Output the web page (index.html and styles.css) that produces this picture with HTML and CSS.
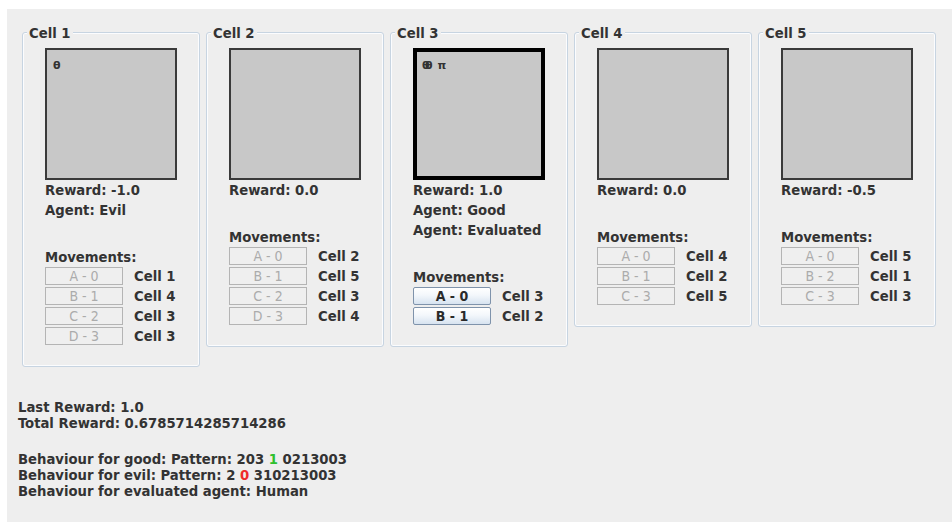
FILE: index.html
```html
<!DOCTYPE html>
<html lang="en">
<head>
<meta charset="utf-8">
<title>Cells</title>
<link rel="stylesheet" href="styles.css">
</head>
<body>
<div class="window">
  <div class="cells">

    <div class="cell">
      <span class="title">Cell 1</span>
      <div class="square"><span class="marks">θ</span></div>
      <div class="labels">
        <div>Reward: -1.0</div>
        <div>Agent: Evil</div>
      </div>
      <div class="moves-head">Movements:</div>
      <div class="moves">
        <button class="move" disabled>A - 0</button><span class="dest">Cell 1</span>
        <button class="move" disabled>B - 1</button><span class="dest">Cell 4</span>
        <button class="move" disabled>C - 2</button><span class="dest">Cell 3</span>
        <button class="move" disabled>D - 3</button><span class="dest">Cell 3</span>
      </div>
    </div>

    <div class="cell">
      <span class="title">Cell 2</span>
      <div class="square"></div>
      <div class="labels">
        <div>Reward: 0.0</div>
      </div>
      <div class="moves-head">Movements:</div>
      <div class="moves">
        <button class="move" disabled>A - 0</button><span class="dest">Cell 2</span>
        <button class="move" disabled>B - 1</button><span class="dest">Cell 5</span>
        <button class="move" disabled>C - 2</button><span class="dest">Cell 3</span>
        <button class="move" disabled>D - 3</button><span class="dest">Cell 4</span>
      </div>
    </div>

    <div class="cell">
      <span class="title">Cell 3</span>
      <div class="square current"><span class="marks"><span class="double">θ</span> π</span></div>
      <div class="labels">
        <div>Reward: 1.0</div>
        <div>Agent: Good</div>
        <div>Agent: Evaluated</div>
      </div>
      <div class="moves-head">Movements:</div>
      <div class="moves">
        <button class="move active">A - 0</button><span class="dest">Cell 3</span>
        <button class="move active">B - 1</button><span class="dest">Cell 2</span>
      </div>
    </div>

    <div class="cell">
      <span class="title">Cell 4</span>
      <div class="square"></div>
      <div class="labels">
        <div>Reward: 0.0</div>
      </div>
      <div class="moves-head">Movements:</div>
      <div class="moves">
        <button class="move" disabled>A - 0</button><span class="dest">Cell 4</span>
        <button class="move" disabled>B - 1</button><span class="dest">Cell 2</span>
        <button class="move" disabled>C - 3</button><span class="dest">Cell 5</span>
      </div>
    </div>

    <div class="cell">
      <span class="title">Cell 5</span>
      <div class="square"></div>
      <div class="labels">
        <div>Reward: -0.5</div>
      </div>
      <div class="moves-head">Movements:</div>
      <div class="moves">
        <button class="move" disabled>A - 0</button><span class="dest">Cell 5</span>
        <button class="move" disabled>B - 2</button><span class="dest">Cell 1</span>
        <button class="move" disabled>C - 3</button><span class="dest">Cell 3</span>
      </div>
    </div>

  </div>

  <div class="info">
    <div class="block">
      <div>Last Reward: 1.0</div>
      <div>Total Reward: 0.6785714285714286</div>
    </div>
    <div class="block">
      <div>Behaviour for good: Pattern: 203 <span class="good">1</span> 0213003</div>
      <div>Behaviour for evil: Pattern: 2 <span class="evil">0</span> 310213003</div>
      <div>Behaviour for evaluated agent: Human</div>
    </div>
  </div>
</div>
</body>
</html>
```

FILE: styles.css
```css
html, body {
  margin: 0;
  height: 100%;
  background: #ffffff;
}

body {
  font-family: "DejaVu Sans Condensed", "DejaVu Sans", "Liberation Sans", sans-serif;
  font-stretch: condensed;
  font-weight: bold;
  font-size: 14.7px;
  color: #333333;
  overflow: hidden;
}

.window {
  margin: 9px 0 0 7px;
  height: calc(100% - 9px);
  box-sizing: border-box;
  background: #eeeeee;
  padding-top: 23px;
}

/* row of cell panels */
.cells {
  display: flex;
  align-items: flex-start;
  gap: 6px;
  padding-left: 15px;
}

.cell {
  position: relative;
  width: 178px;
  box-sizing: border-box;
  border: 1px solid #c7d4e1;
  border-radius: 3px;
  box-shadow: inset 0 0 0 1px #fbfcfe;
  padding: 15px 22px 21px 22px;
}

.title {
  position: absolute;
  top: -8px;
  left: 4px;
  padding: 0 2px;
  line-height: 16px;
  background: #eeeeee;
}

.square {
  width: 132px;
  height: 132px;
  box-sizing: border-box;
  border: 2px solid #3a3a3a;
  background: #c8c8c8;
  padding: 9px 5px 0 6px;
}

.square.current {
  border: 4px solid #000000;
  padding: 7px 4px 0 5px;
}

.marks {
  display: block;
  font-family: "DejaVu Sans", sans-serif;
  font-stretch: normal;
  font-size: 11px;
  line-height: 13px;
  color: #333333;
}

.double {
  text-shadow: 3px 0 0 #333333;
  margin-right: 4px;
}

.labels {
  line-height: 20px;
}

.moves-head {
  margin-top: 27px;
  line-height: 20px;
}

.moves {
  display: grid;
  grid-template-columns: 78px auto;
  column-gap: 11px;
  row-gap: 2px;
  align-items: center;
}

.move {
  height: 18px;
  margin: 0;
  padding: 0;
  box-sizing: border-box;
  font-family: "DejaVu Sans Condensed", "DejaVu Sans", "Liberation Sans", sans-serif;
  font-stretch: condensed;
  font-size: 14px;
  font-weight: normal;
  line-height: 16px;
  color: #ababab;
  background: #efefef;
  border: 1px solid #b4b4b4;
  border-radius: 0;
}

.move.active {
  font-weight: bold;
  color: #2a2a2a;
  background: linear-gradient(#ffffff, #f3f7fb 45%, #d7e3f0);
  border: 1px solid #7f93ab;
  border-radius: 2px;
}

.dest {
  line-height: 18px;
}

/* totals and behaviour summary */
.info {
  margin-top: 32px;
  padding-left: 11px;
  line-height: 16px;
}

.info .block + .block {
  margin-top: 20px;
}

.good {
  color: #2fc02f;
}

.evil {
  color: #ee2b2b;
}
```
